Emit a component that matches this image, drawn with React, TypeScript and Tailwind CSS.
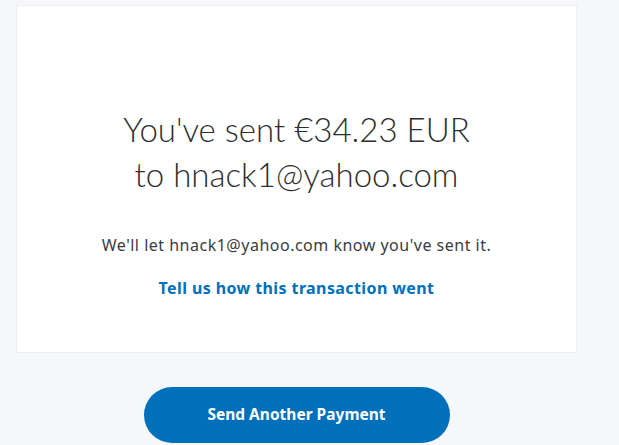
export default function App() {
  return (
    <div className="min-h-[445px] bg-[#f5f7fa] pt-[5px] pl-[16px] pr-[42px]" style={{ fontFamily: '"Noto Sans", sans-serif' }}>
      <div className="w-[561px] h-[348px] bg-white border border-[#eceef1] flex flex-col items-center pt-[101px]">
        <h1 className="text-center text-[33px] leading-[45px] font-light text-[#2c2e2f] font-['Lato',sans-serif]">
          You've sent €34.23 EUR
          <br />
          to hnack1@yahoo.com
        </h1>
        <p className="mt-[36px] text-[16px] tracking-[0.5px] text-[#3a3c3e]">
          We'll let hnack1@yahoo.com know you've sent it.
        </p>
        <a href="#" className="mt-[19px] text-[16px] font-bold text-[#0070ba] tracking-[0.4px]">
          Tell us how this transaction went
        </a>
      </div>
      <div className="w-[561px] flex justify-center mt-[34px]">
        <button className="w-[306px] h-[56px] rounded-full bg-[#0070ba] text-white text-[15.5px] font-bold">
          Send Another Payment
        </button>
      </div>
    </div>
  );
}
